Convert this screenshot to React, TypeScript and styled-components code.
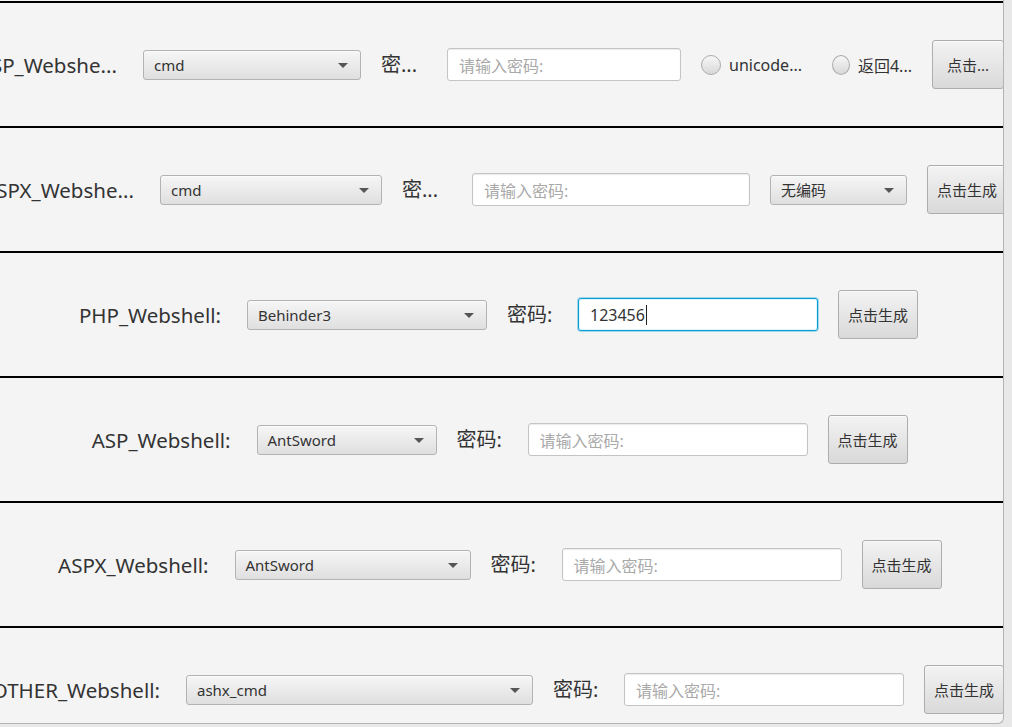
import React from 'react';
import styled, { createGlobalStyle } from 'styled-components';

const GlobalStyle = createGlobalStyle`
  html, body {
    margin: 0;
    padding: 0;
    background: #e8e8e8;
    font-family: "Noto Sans", "Noto Sans CJK SC", sans-serif;
    color: #333333;
  }
`;

const Panel = styled.div`
  width: 1004px;
  height: 724px;
  padding-top: 1px;
  box-sizing: border-box;
  background: #f4f4f4;
  border-right: 1px solid #b4b4b4;
  border-bottom: 1px solid #b4b4b4;
  border-bottom-right-radius: 6px;
  overflow: hidden;
`;

const Row = styled.div`
  display: flex;
  align-items: center;
  justify-content: center;
  gap: 20px;
  height: 125px;
  box-sizing: border-box;
  padding-right: 6px;
  border-top: 2px solid #000;
  overflow: hidden;

  & > * {
    flex-shrink: 0;
  }
`;

const NameLabel = styled.div<{ $width: number }>`
  width: ${(p) => p.$width}px;
  box-sizing: border-box;
  padding-right: 6px;
  display: flex;
  justify-content: flex-end;
  white-space: nowrap;
  font-size: 20.5px;
  line-height: 26px;
`;

const PwLabel = styled.div<{ $width: number }>`
  width: ${(p) => p.$width}px;
  white-space: nowrap;
  font-size: 20px;
  line-height: 26px;
`;

const Combo = styled.div<{ $width: number }>`
  position: relative;
  width: ${(p) => p.$width}px;
  height: 30px;
  box-sizing: border-box;
  display: flex;
  align-items: center;
  padding-left: 10px;
  border: 1px solid #b3b3b3;
  border-radius: 3px;
  background: linear-gradient(#f6f6f6, #dfdfdf);
  box-shadow: inset 0 1px 0 #fbfbfb;
  font-size: 15px;
  white-space: nowrap;
`;

const Arrow = styled.span`
  position: absolute;
  right: 12px;
  top: 12px;
  width: 0;
  height: 0;
  border-left: 5px solid transparent;
  border-right: 5px solid transparent;
  border-top: 5px solid #555;
`;

const Field = styled.div<{ $width: number; $focused?: boolean }>`
  width: ${(p) => p.$width}px;
  height: 33px;
  box-sizing: border-box;
  display: flex;
  align-items: center;
  padding-left: 11px;
  background: #fff;
  border: 1px solid ${(p) => (p.$focused ? '#0a9ed6' : '#c4c4c4')};
  border-radius: 3px;
  box-shadow: ${(p) =>
    p.$focused ? '0 0 0 1px rgba(10, 158, 214, 0.35), inset 0 0 0 1px #e2f4fb' : 'inset 0 1px 1px #ececec'};
  font-size: 16px;
  white-space: nowrap;
`;

const Placeholder = styled.span`
  color: #a9a9a9;
`;

const Caret = styled.span`
  display: inline-block;
  width: 1px;
  height: 20px;
  margin-left: 1px;
  background: #222;
`;

const Radio = styled.div<{ $width: number }>`
  width: ${(p) => p.$width}px;
  display: flex;
  align-items: center;
  gap: 8px;
  font-size: 16px;
  white-space: nowrap;
`;

const RadioDot = styled.span`
  width: 20px;
  height: 20px;
  box-sizing: border-box;
  border-radius: 50%;
  border: 1px solid #acacac;
  background: linear-gradient(#f7f7f7, #d8d8d8);
`;

const Button = styled.div<{ $width: number }>`
  width: ${(p) => p.$width}px;
  height: 49px;
  box-sizing: border-box;
  display: flex;
  align-items: center;
  justify-content: center;
  border: 1px solid #adadad;
  border-radius: 3px;
  background: linear-gradient(#f3f3f3, #d9d9d9);
  box-shadow: inset 0 1px 0 #fafafa;
  font-size: 15px;
  white-space: nowrap;
`;

const PLACEHOLDER = '请输入密码:';

export default function App() {
  return (
    <>
      <GlobalStyle />
      <Panel>
        <Row>
          <NameLabel $width={130}>JSP_Webshe...</NameLabel>
          <Combo $width={218}>
            cmd
            <Arrow />
          </Combo>
          <PwLabel $width={46}>密...</PwLabel>
          <Field $width={234}>
            <Placeholder>{PLACEHOLDER}</Placeholder>
          </Field>
          <Radio $width={111}>
            <RadioDot />
            unicode...
          </Radio>
          <Radio $width={80}>
            <RadioDot />
            返回4...
          </Radio>
          <Button $width={72}>点击...</Button>
        </Row>

        <Row>
          <NameLabel $width={150}>ASPX_Webshe...</NameLabel>
          <Combo $width={222}>
            cmd
            <Arrow />
          </Combo>
          <PwLabel $width={50}>密...</PwLabel>
          <Field $width={278}>
            <Placeholder>{PLACEHOLDER}</Placeholder>
          </Field>
          <Combo $width={137}>
            无编码
            <Arrow />
          </Combo>
          <Button $width={80}>点击生成</Button>
        </Row>

        <Row>
          <NameLabel $width={148}>PHP_Webshell:</NameLabel>
          <Combo $width={240}>
            Behinder3
            <Arrow />
          </Combo>
          <PwLabel $width={51}>密码:</PwLabel>
          <Field $width={240} $focused>
            123456
            <Caret />
          </Field>
          <Button $width={80}>点击生成</Button>
        </Row>

        <Row>
          <NameLabel $width={147}>ASP_Webshell:</NameLabel>
          <Combo $width={180}>
            AntSword
            <Arrow />
          </Combo>
          <PwLabel $width={51}>密码:</PwLabel>
          <Field $width={280}>
            <Placeholder>{PLACEHOLDER}</Placeholder>
          </Field>
          <Button $width={80}>点击生成</Button>
        </Row>

        <Row>
          <NameLabel $width={159}>ASPX_Webshell:</NameLabel>
          <Combo $width={236}>
            AntSword
            <Arrow />
          </Combo>
          <PwLabel $width={51}>密码:</PwLabel>
          <Field $width={280}>
            <Placeholder>{PLACEHOLDER}</Placeholder>
          </Field>
          <Button $width={80}>点击生成</Button>
        </Row>

        <Row>
          <NameLabel $width={173}>OTHER_Webshell:</NameLabel>
          <Combo $width={347}>
            ashx_cmd
            <Arrow />
          </Combo>
          <PwLabel $width={51}>密码:</PwLabel>
          <Field $width={280}>
            <Placeholder>{PLACEHOLDER}</Placeholder>
          </Field>
          <Button $width={80}>点击生成</Button>
        </Row>
      </Panel>
    </>
  );
}
